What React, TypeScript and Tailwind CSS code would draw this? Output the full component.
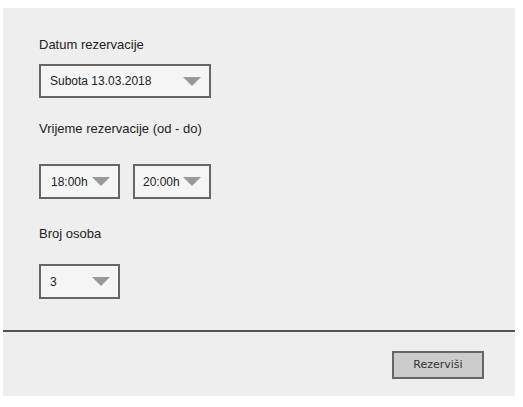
import React from "react";

function Tri() {
  return (
    <div className="w-0 h-0 border-l-[9px] border-r-[9px] border-t-[9px] border-l-transparent border-r-transparent border-t-[#999999] shrink-0" />
  );
}

function Select({ w, h, text, pl }: { w: string; h: string; text: string; pl: string }) {
  return (
    <div
      className={`${w} ${h} border-2 border-[#666666] bg-[#f5f5f5] flex items-center justify-between pr-[8px] ${pl}`}
    >
      <span className="text-[12px] leading-[14px] text-[#222]">{text}</span>
      <Tri />
    </div>
  );
}

export default function App() {
  return (
    <div
      className="w-[523px] h-[407px] bg-white pt-[8px] pl-[3px]"
      style={{ fontFamily: '"Liberation Sans", Arial, sans-serif' }}
    >
      <div className="w-[512px] h-[388px] bg-[#eeeeee] flex flex-col">
        <div className="pl-[36px] pt-[29px] flex flex-col">
          <div className="text-[13px] leading-[16px] text-[#222]">Datum rezervacije</div>
          <div className="mt-[11px]">
            <Select w="w-[172px]" h="h-[34px]" text="Subota 13.03.2018" pl="pl-[9px]" />
          </div>
          <div className="mt-[23px] text-[13px] leading-[16px] text-[#222]">
            Vrijeme rezervacije (od - do)
          </div>
          <div className="mt-[27px] flex gap-[13px]">
            <Select w="w-[81px]" h="h-[35px]" text="18:00h" pl="pl-[10px]" />
            <Select w="w-[78px]" h="h-[35px]" text="20:00h" pl="pl-[8px]" />
          </div>
          <div className="mt-[27px] text-[13px] leading-[16px] text-[#222]">Broj osoba</div>
          <div className="mt-[22px]">
            <Select w="w-[81px]" h="h-[35px]" text="3" pl="pl-[9px]" />
          </div>
        </div>
        <div className="mt-[31px] h-[2px] bg-[#555555]" />
        <div className="flex justify-end pr-[31px] mt-[19px]">
          <button
            className="w-[92px] h-[28px] border-2 border-[#666666] bg-[#cccccc] text-[11px] text-[#333] flex items-center justify-center"
            style={{ fontFamily: '"DejaVu Sans", sans-serif' }}
          >
            Rezerviši
          </button>
        </div>
      </div>
    </div>
  );
}
